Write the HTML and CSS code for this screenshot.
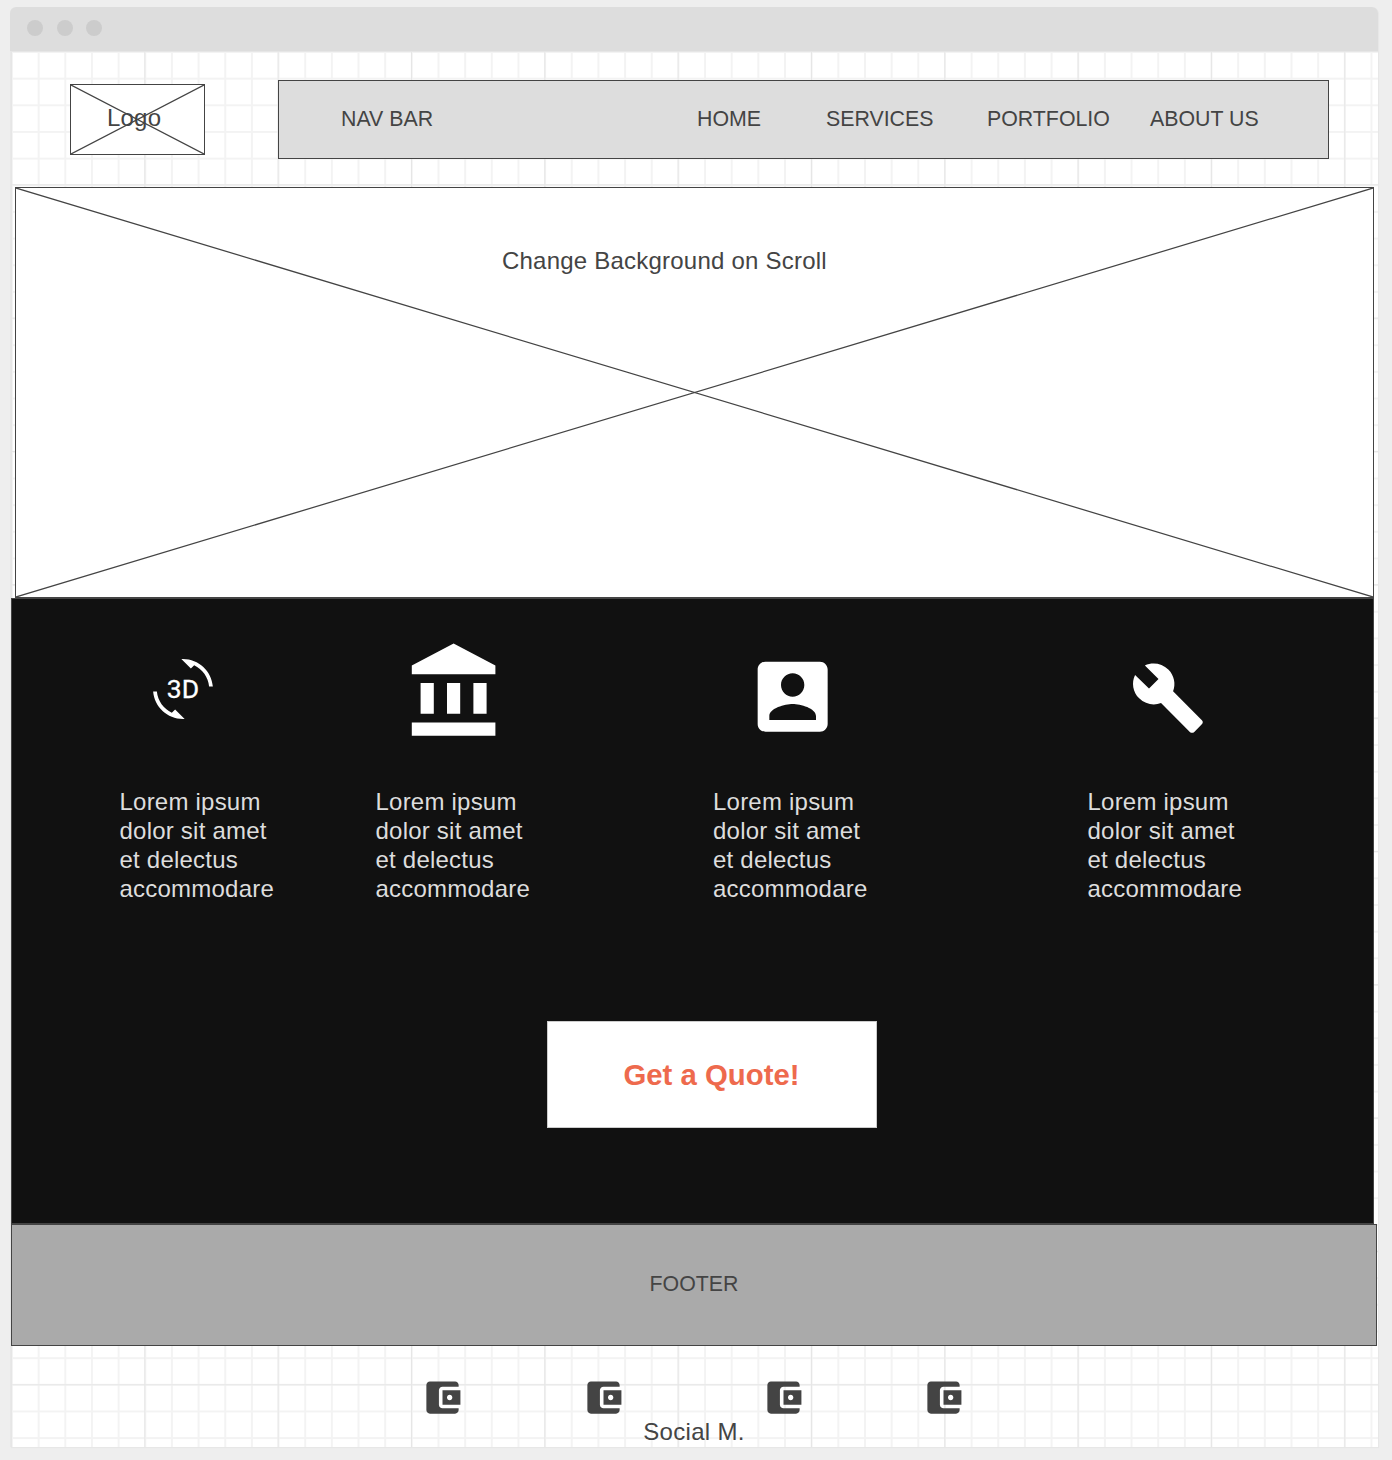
FILE: index.html
```html
<!DOCTYPE html>
<html lang="en">
	<head>
		<meta charset="UTF-8">
		<title>Wireframe</title>
		<link rel="stylesheet" href="styles.css">
	</head>
	<body>
		<div class="window">
			<div class="titlebar">
				<span class="dot"></span>
				<span class="dot"></span>
				<span class="dot"></span>
			</div>
			<div class="canvas">
				<header class="header">
					<div class="logo">
						<svg class="cross" viewBox="0 0 100 100" preserveAspectRatio="none">
							<path d="M0 0L100 100M100 0L0 100"></path>
						</svg>
						<span>Logo</span>
					</div>
					<nav class="nav">
						<span>NAV BAR</span>
						<span>HOME</span>
						<span>SERVICES</span>
						<span>PORTFOLIO</span>
						<span>ABOUT US</span>
					</nav>
				</header>
				<section class="hero">
					<svg class="cross" viewBox="0 0 100 100" preserveAspectRatio="none">
						<path d="M0 0L100 100M100 0L0 100"></path>
					</svg>
					<span>Change Background on Scroll</span>
				</section>
				<section class="dark">
					<div class="features">
						<div class="feature">
							<div class="feature-icon">
								<svg class="icon-rotate" viewBox="0 0 24 24">
									<path d="M7.52 21.48C4.25 19.94 1.91 16.76 1.55 13H.05C.56 19.16 5.71 24 12 24l.66-.03-3.81-3.81-1.33 1.32zM12 0l-.66.03 3.81 3.81 1.33-1.33c3.27 1.55 5.61 4.72 5.96 8.48h1.5C23.44 4.84 18.29 0 12 0z"></path>
									<text x="5.5" y="15.7" class="icon-label">3D</text>
								</svg>
							</div>
							<p>Lorem ipsum<br>dolor sit amet<br>et delectus<br>accommodare</p>
						</div>
						<div class="feature">
							<div class="feature-icon">
								<svg class="icon-bank" viewBox="0 0 24 24">
									<path d="M4 10v7h3v-7H4zm6 0v7h3v-7h-3zM2 22h19v-3H2v3zm14-12v7h3v-7h-3zm-4.5-9L2 6v2h19V6l-9.5-5z"></path>
								</svg>
							</div>
							<p>Lorem ipsum<br>dolor sit amet<br>et delectus<br>accommodare</p>
						</div>
						<div class="feature">
							<div class="feature-icon">
								<svg class="icon-person" viewBox="0 0 24 24">
									<path d="M3 5v14c0 1.1.89 2 2 2h14c1.1 0 2-.9 2-2V5c0-1.1-.9-2-2-2H5c-1.11 0-2 .9-2 2zm12 4c0 1.66-1.34 3-3 3s-3-1.34-3-3 1.34-3 3-3 3 1.34 3 3zm-9 8c0-2 4-3.1 6-3.1s6 1.1 6 3.1v1H6v-1z"></path>
								</svg>
							</div>
							<p>Lorem ipsum<br>dolor sit amet<br>et delectus<br>accommodare</p>
						</div>
						<div class="feature">
							<div class="feature-icon">
								<svg class="icon-wrench" viewBox="0 0 24 24">
									<path d="M22.7 19l-9.1-9.1c.9-2.3.4-5-1.5-6.9-2-2-5-2.4-7.4-1.3L9 6 6 9 1.6 4.7C.4 7.1.9 10.1 2.9 12.1c1.9 1.9 4.6 2.4 6.9 1.5l9.1 9.1c.4.4 1 .4 1.4 0l2.3-2.3c.5-.4.5-1.1.1-1.4z"></path>
								</svg>
							</div>
							<p>Lorem ipsum<br>dolor sit amet<br>et delectus<br>accommodare</p>
						</div>
					</div>
					<button class="quote">Get a Quote!</button>
				</section>
				<footer class="footer">FOOTER</footer>
				<div class="social">
					<div class="social-icons">
						<svg viewBox="0 0 24 24"><path d="M21 18v1c0 1.1-.9 2-2 2H5c-1.11 0-2-.9-2-2V5c0-1.1.89-2 2-2h14c1.1 0 2 .9 2 2v1h-9c-1.11 0-2 .9-2 2v8c0 1.1.89 2 2 2h9zm-9-2h10V8H12v8zm4-2.5c-.83 0-1.5-.67-1.5-1.5s.67-1.5 1.5-1.5 1.5.67 1.5 1.5-.67 1.5-1.5 1.5z"></path></svg>
						<svg viewBox="0 0 24 24"><path d="M21 18v1c0 1.1-.9 2-2 2H5c-1.11 0-2-.9-2-2V5c0-1.1.89-2 2-2h14c1.1 0 2 .9 2 2v1h-9c-1.11 0-2 .9-2 2v8c0 1.1.89 2 2 2h9zm-9-2h10V8H12v8zm4-2.5c-.83 0-1.5-.67-1.5-1.5s.67-1.5 1.5-1.5 1.5.67 1.5 1.5-.67 1.5-1.5 1.5z"></path></svg>
						<svg viewBox="0 0 24 24"><path d="M21 18v1c0 1.1-.9 2-2 2H5c-1.11 0-2-.9-2-2V5c0-1.1.89-2 2-2h14c1.1 0 2 .9 2 2v1h-9c-1.11 0-2 .9-2 2v8c0 1.1.89 2 2 2h9zm-9-2h10V8H12v8zm4-2.5c-.83 0-1.5-.67-1.5-1.5s.67-1.5 1.5-1.5 1.5.67 1.5 1.5-.67 1.5-1.5 1.5z"></path></svg>
						<svg viewBox="0 0 24 24"><path d="M21 18v1c0 1.1-.9 2-2 2H5c-1.11 0-2-.9-2-2V5c0-1.1.89-2 2-2h14c1.1 0 2 .9 2 2v1h-9c-1.11 0-2 .9-2 2v8c0 1.1.89 2 2 2h9zm-9-2h10V8H12v8zm4-2.5c-.83 0-1.5-.67-1.5-1.5s.67-1.5 1.5-1.5 1.5.67 1.5 1.5-.67 1.5-1.5 1.5z"></path></svg>
					</div>
					<div class="social-label">Social M.</div>
				</div>
			</div>
		</div>
	</body>
</html>
```

FILE: styles.css
```css
* {
	box-sizing: border-box;
}

html,
body {
	height: 100%;
}

body {
	margin:      0;
	padding:     7px 14px 0 10px;
	background:  #eee;
	color:       #444;
	font-family: "Liberation Sans", Arial, sans-serif;
	overflow:    hidden;
}

.window {
	width:         1368px;
	height:        1440px;
	display:       flex;
	flex-direction: column;
	border-radius: 6px 6px 0 0;
	box-shadow:    1px 1px 1px #e6e6e6;
}

.titlebar {
	height:         44px;
	flex-shrink:    0;
	display:        flex;
	align-items:    center;
	padding:        0 0 2px 17px;
	gap:            13.5px;
	background:     #ddd;
	border-radius:  6px 6px 0 0;
}

.dot {
	width:         16px;
	height:        16px;
	border-radius: 50%;
	background:    #ccc;
}

.canvas {
	flex:        1;
	border-left: 1px solid #e8e8e8;
	background-color: #fff;
	background-image:
		linear-gradient(to right, #e6e6e6 1px, transparent 1px),
		linear-gradient(to bottom, #e6e6e6 1px, transparent 1px),
		linear-gradient(to right, #f3f3f3 2px, transparent 2px),
		linear-gradient(to bottom, #f3f3f3 2px, transparent 2px);
	background-size:
		133.33px 133.33px,
		133.33px 133.33px,
		26.667px 26.667px,
		26.667px 26.667px;
	background-position: 0 0;
}

.cross {
	position: absolute;
	top:      0;
	left:     0;
	width:    100%;
	height:   100%;
}

.cross path {
	fill:          none;
	stroke:        #444;
	stroke-width:  1.25px;
	vector-effect: non-scaling-stroke;
}

.header {
	height:       136px;
	padding-top:  1px;
	display:      flex;
	align-items:  center;
}

.logo {
	position:       relative;
	width:          135px;
	height:         71px;
	margin-left:    59px;
	padding:        0 0 3px 36px;
	display:        flex;
	align-items:    center;
	background:     #fff;
	border:         1px solid #444;
	font-size:      24px;
	letter-spacing: 0.2px;
}

.logo span {
	position: relative;
}

.nav {
	width:        1051px;
	height:       79px;
	margin-left:  73px;
	padding:      0 0 0 62px;
	display:      grid;
	grid-template-columns: 356px 129px 161px 163px auto;
	align-items:  center;
	background:   #ddd;
	border:       1px solid #444;
	font-size:    21.33px;
}

.hero {
	position:     relative;
	width:        1359px;
	height:       411px;
	padding:      59px 0 0 486px;
	margin-left:  4px;
	background:   #fff;
	border:       1px solid #444;
	font-size:    24px;
	line-height:  28px;
}

.hero span {
	position:       relative;
	letter-spacing: 0.22px;
}

.dark {
	width:      1363px;
	height:     626px;
	padding-left: 107.5px;
	background: #111;
	border:     1px solid #444;
}

.features {
	display: grid;
	grid-template-columns: 256px 337.5px 374.5px 1fr;
}

.feature-icon {
	height:  188px;
	display: flow-root;
}

.feature-icon svg {
	display: block;
	fill:    #fff;
}

.icon-rotate {
	width:       60px;
	height:      60px;
	margin:      60px 0 0 33.5px;
}

.icon-label {
	font-family:  Roboto, sans-serif;
	font-size:    10.6px;
	fill:         #fff;
	stroke:       #fff;
	stroke-width: 0.12px;
}

.icon-bank {
	width:  105.6px;
	height: 105.6px;
	margin: 39.6px 0 0 27.1px;
}

.icon-person {
	width:  93.33px;
	height: 93.33px;
	margin: 51.4px 0 0 33px;
}

.icon-wrench {
	width:  76px;
	height: 76px;
	margin: 60.5px 0 0 42.5px;
}

.feature p {
	margin:         0;
	color:          #ddd;
	font-size:      24px;
	line-height:    29px;
	letter-spacing: 0.22px;
}

.quote {
	display:     block;
	width:       330px;
	height:      107px;
	margin:      118px 0 0 427px;
	padding:     0;
	background:  #fff;
	border:      1px solid #ccc;
	color:       #ee6a4d;
	font-family: inherit;
	font-size:   29.33px;
	font-weight: bold;
}

.footer {
	width:       1366px;
	height:      122px;
	padding-bottom: 2px;
	display:     flex;
	align-items: center;
	justify-content: center;
	background:  #aaa;
	border:      1px solid #444;
	font-size:   21.33px;
}

.social-icons {
	padding:     29.5px 0 0 409.5px;
	display:     grid;
	grid-template-columns: 161px 180px 160px 44px;
}

.social-icons svg {
	display: block;
	width:   43px;
	height:  43px;
	fill:    #444;
}

.social-label {
	margin-top:     -1px;
	padding-right:  1px;
	text-align:     center;
	font-size:      24px;
	line-height:    28px;
	letter-spacing: 0.33px;
}
```
